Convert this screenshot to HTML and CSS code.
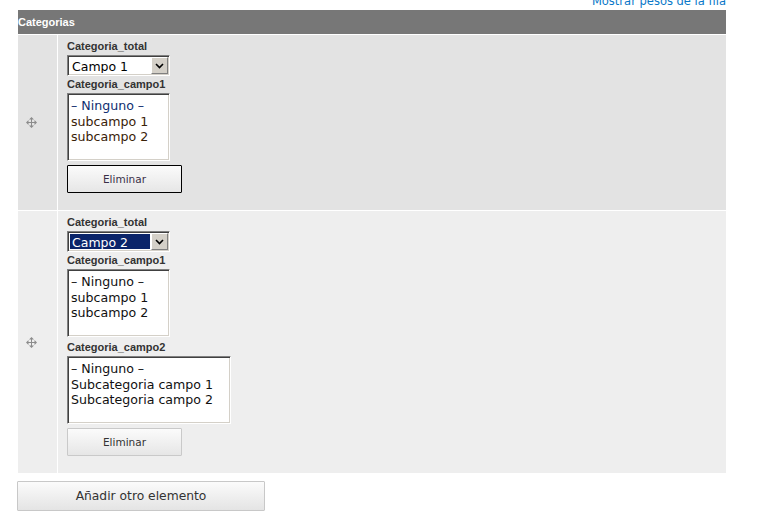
FILE: index.html
```html
<!DOCTYPE html>
<html lang="es">
<head>
<meta charset="utf-8">
<title>Categorias</title>
<link rel="stylesheet" href="styles.css">
</head>
<body>
<div class="page">
  <div class="toplink"><a href="#">Mostrar pesos de la fila</a></div>
  <div class="table">
    <div class="thead">Categorias</div>

    <div class="row row-odd">
      <div class="handle-cell">
        <svg class="drag" width="11" height="11" viewBox="0 0 11 11"><path d="M5.5 0L3 2.5H8Z M5.5 11L3 8.5H8Z M0 5.5L2.5 3V8Z M11 5.5L8.5 3V8Z" fill="#8c8c8c"/><path d="M5.5 2V9M2 5.5H9" stroke="#8c8c8c" stroke-width="1"/></svg>
      </div>
      <div class="content-cell">
        <div class="field">
          <div class="lbl">Categoria_total</div>
          <div class="select"><span class="sel-text">Campo 1</span><span class="sel-btn"><svg width="9" height="6" viewBox="0 0 9 6"><path d="M1 1L4.5 4.5L8 1" fill="none" stroke="#000" stroke-width="1.6"/></svg></span></div>
        </div>
        <div class="field">
          <div class="lbl">Categoria_campo1</div>
          <div class="listbox">
            <div class="opt opt-first">– Ninguno –</div>
            <div class="opt opt-warm">subcampo 1</div>
            <div class="opt opt-warm">subcampo 2</div>
          </div>
        </div>
        <button class="btn btn-focus" type="button">Eliminar</button>
      </div>
    </div>

    <div class="row row-even">
      <div class="handle-cell">
        <svg class="drag" width="11" height="11" viewBox="0 0 11 11"><path d="M5.5 0L3 2.5H8Z M5.5 11L3 8.5H8Z M0 5.5L2.5 3V8Z M11 5.5L8.5 3V8Z" fill="#8c8c8c"/><path d="M5.5 2V9M2 5.5H9" stroke="#8c8c8c" stroke-width="1"/></svg>
      </div>
      <div class="content-cell">
        <div class="field">
          <div class="lbl">Categoria_total</div>
          <div class="select"><span class="sel-text selected">Campo 2</span><span class="sel-btn"><svg width="9" height="6" viewBox="0 0 9 6"><path d="M1 1L4.5 4.5L8 1" fill="none" stroke="#000" stroke-width="1.6"/></svg></span></div>
        </div>
        <div class="field">
          <div class="lbl">Categoria_campo1</div>
          <div class="listbox">
            <div class="opt">– Ninguno –</div>
            <div class="opt">subcampo 1</div>
            <div class="opt">subcampo 2</div>
          </div>
        </div>
        <div class="field">
          <div class="lbl">Categoria_campo2</div>
          <div class="listbox listbox-wide">
            <div class="opt">– Ninguno –</div>
            <div class="opt">Subcategoria campo 1</div>
            <div class="opt">Subcategoria campo 2</div>
          </div>
        </div>
        <button class="btn" type="button">Eliminar</button>
      </div>
    </div>
  </div>
  <button class="btn-add" type="button">Añadir otro elemento</button>
</div>
</body>
</html>
```

FILE: styles.css
```css
html, body {
  margin: 0;
  padding: 0;
  background: #fff;
}

.page {
  padding-left: 17px;
  width: 709px;
  display: flex;
  flex-direction: column;
  align-items: flex-start;
}

.toplink {
  width: 708px;
  margin-left: 1px;
  margin-top: -5px;
  height: 15px;
  line-height: 12px;
  text-align: right;
  font-family: "DejaVu Sans", sans-serif;
  font-size: 11.5px;
}

.toplink a {
  color: #0a78c8;
  text-decoration: none;
}

.table {
  width: 708px;
  margin-left: 1px;
  display: flex;
  flex-direction: column;
  gap: 1px;
  background: #fff;
}

.thead {
  height: 24px;
  line-height: 24px;
  background: #777777;
  color: #fff;
  font-family: "Liberation Sans", Arial, sans-serif;
  font-weight: bold;
  font-size: 11px;
}

.row {
  display: grid;
  grid-template-columns: 39px 1fr;
  gap: 1px;
}

.row-odd .handle-cell,
.row-odd .content-cell {
  background: #e3e3e3;
}

.row-even .handle-cell,
.row-even .content-cell {
  background: #eeeeee;
}

.handle-cell {
  display: flex;
  align-items: center;
  padding-left: 8px;
}

.drag {
  display: block;
}

.content-cell {
  padding: 5px 0 17px 9px;
  display: flex;
  flex-direction: column;
  align-items: flex-start;
}

.field {
  display: flex;
  flex-direction: column;
  align-items: flex-start;
}

.lbl {
  font-family: "Liberation Sans", Arial, sans-serif;
  font-weight: bold;
  font-size: 11px;
  line-height: 13px;
  color: #333;
  margin-bottom: 2px;
}

.select {
  box-sizing: border-box;
  width: 103px;
  height: 21px;
  border: 1px solid;
  border-color: #808080 #ffffff #ffffff #808080;
  box-shadow: inset 1px 1px 0 #404040, inset -1px -1px 0 #d4d0c8;
  background: #fff;
  padding: 1px;
  display: flex;
  margin-bottom: 2px;
}

.sel-text {
  flex: 1;
  margin: 1px;
  padding: 2px 0 0 2px;
  line-height: 13px;
  font-family: "DejaVu Sans", sans-serif;
  font-size: 12.5px;
  color: #000;
  white-space: nowrap;
  overflow: hidden;
}

.sel-text.selected {
  background: #0a246a;
  color: #fff;
}

.sel-btn {
  box-sizing: border-box;
  width: 17px;
  background: #d4d0c8;
  border: 1px solid;
  border-color: #ffffff #808080 #808080 #ffffff;
  display: flex;
  align-items: center;
  justify-content: center;
}

.sel-btn svg {
  display: block;
}

.listbox {
  box-sizing: border-box;
  width: 103px;
  height: 68px;
  border: 1px solid;
  border-color: #808080 #ffffff #ffffff #808080;
  box-shadow: inset 1px 1px 0 #404040, inset -1px -1px 0 #d4d0c8;
  background: #fff;
  padding: 4px 3px 0 3px;
  margin-bottom: 4px;
  font-family: "DejaVu Sans", sans-serif;
  font-size: 12.6px;
  line-height: 15.7px;
  color: #111;
  white-space: nowrap;
  overflow: hidden;
}

.listbox-wide {
  width: 164px;
}

.opt-first {
  color: #0f2f70;
}

.opt-warm {
  color: #3a2208;
}

.btn {
  box-sizing: border-box;
  width: 115px;
  height: 28px;
  border: 1px solid #c9c9c9;
  border-radius: 1px;
  background: linear-gradient(#fbfbfb, #e6e6e6);
  font-family: "DejaVu Sans", sans-serif;
  font-size: 10.5px;
  color: #333;
  padding: 0;
  margin: 0;
}

.btn-focus {
  border-color: #000;
  color: #3a2f48;
}

.btn-add {
  box-sizing: border-box;
  width: 248px;
  height: 30px;
  margin-top: 8px;
  border: 1px solid #c8c8c8;
  border-radius: 1px;
  background: linear-gradient(#fbfbfb, #e4e4e4);
  font-family: "DejaVu Sans", sans-serif;
  font-size: 12.3px;
  color: #333;
  padding: 0;
}
```
